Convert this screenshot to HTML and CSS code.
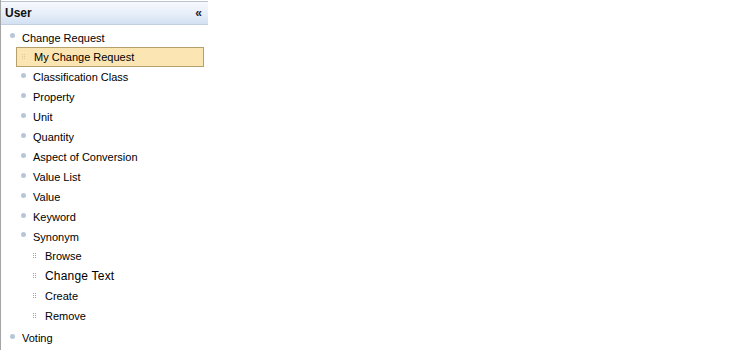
FILE: index.html
```html
<!DOCTYPE html>
<html>
<head>
    <title>User</title>
    <link rel="stylesheet" href="styles.css">
</head>
<body>
    <div class="panel">
        <div class="panel-header">
            <span class="panel-title">User</span>
            <span class="collapse">&laquo;</span>
        </div>

        <ul class="tree">
            <li>
                <div class="row lvl0 first"><span class="bullet"></span>Change Request</div>
                <ul>
                    <li><div class="row lvl1 selected"><span class="grip"></span>My Change Request</div></li>
                    <li><div class="row lvl1"><span class="bullet"></span>Classification Class</div></li>
                    <li><div class="row lvl1"><span class="bullet"></span>Property</div></li>
                    <li><div class="row lvl1"><span class="bullet"></span>Unit</div></li>
                    <li><div class="row lvl1"><span class="bullet"></span>Quantity</div></li>
                    <li><div class="row lvl1"><span class="bullet"></span>Aspect of Conversion</div></li>
                    <li><div class="row lvl1"><span class="bullet"></span>Value List</div></li>
                    <li><div class="row lvl1"><span class="bullet"></span>Value</div></li>
                    <li><div class="row lvl1"><span class="bullet"></span>Keyword</div></li>
                    <li>
                        <div class="row lvl1 short"><span class="bullet"></span>Synonym</div>
                        <ul>
                            <li><div class="row lvl2"><span class="grip"></span>Browse</div></li>
                            <li><div class="row lvl2 hover"><span class="grip"></span>Change Text</div></li>
                            <li><div class="row lvl2"><span class="grip"></span>Create</div></li>
                            <li><div class="row lvl2"><span class="grip"></span>Remove</div></li>
                        </ul>
                    </li>
                </ul>
            </li>
            <li><div class="row lvl0 last"><span class="bullet"></span>Voting</div></li>
        </ul>
    </div>
</body>
</html>
```

FILE: styles.css
```css
body {
    margin: 0;
    padding: 0;
    background-color: #fff;
    font-family: "Liberation Sans", Arial, sans-serif;
    font-size: 11px;
    color: #000;
}

.panel {
    width: 208px;
    height: 350px;
    border-left: 1px solid #a5a5a5;
    padding-top: 1px;
    box-sizing: border-box;
}

.panel-header {
    height: 22px;
    border-top: 1px solid #b9c4d2;
    border-bottom: 1px solid #c3d0e2;
    background: linear-gradient(#f7f9fd, #e6eef9 55%, #d3e0f2);
    display: flex;
    align-items: center;
    justify-content: space-between;
    padding: 0 6px 0 4px;
}

.panel-title {
    font-size: 12px;
    font-weight: bold;
    color: #111;
}

.collapse {
    font-size: 12px;
    font-weight: bold;
    color: #223;
}

.tree, .tree ul {
    list-style: none;
    margin: 0;
    padding: 0;
}

.tree {
    padding-top: 3px;
}

.row {
    height: 20px;
    display: flex;
    align-items: center;
    white-space: nowrap;
    box-sizing: border-box;
}

.row.first, .row.short {
    height: 19px;
}

.row.last {
    margin-top: 2px;
}

.lvl0 { padding-left: 9px; }
.lvl1 { padding-left: 20px; }
.lvl2 { padding-left: 32px; }

.bullet {
    width: 5px;
    height: 5px;
    border-radius: 50%;
    background: #b7c6d8;
    margin-right: 7px;
    position: relative;
    top: -2px;
}

.grip {
    width: 3px;
    height: 5px;
    margin-right: 9px;
    position: relative;
    top: -1px;
}

.grip::before {
    content: "";
    position: absolute;
    left: 0;
    top: 0;
    width: 1px;
    height: 1px;
    background: #a3a3a3;
    box-shadow: 2px 0 #a3a3a3, 0 2px #a3a3a3, 2px 2px #a3a3a3, 0 4px #a3a3a3, 2px 4px #a3a3a3;
}

.selected {
    margin-left: 15px;
    width: 188px;
    padding-left: 5px;
    background: #fbe6b3;
    border: 1px solid #b3a06a;
}

.selected .grip::before {
    background: #dcc893;
    box-shadow: 2px 0 #dcc893, 0 2px #dcc893, 2px 2px #dcc893, 0 4px #dcc893, 2px 4px #dcc893;
}

.hover {
    font-size: 12px;
    letter-spacing: 0.2px;
}
```
